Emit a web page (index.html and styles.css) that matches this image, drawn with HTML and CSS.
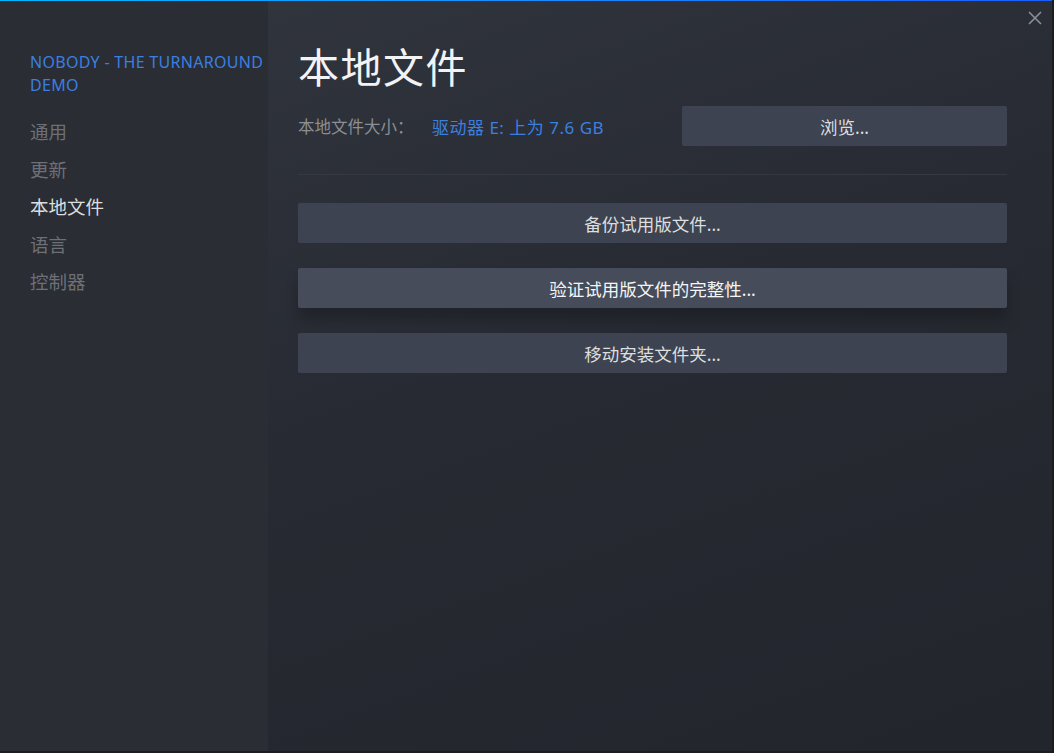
FILE: index.html
```html
<!DOCTYPE html>
<html lang="zh-CN">

<head>
    <meta charset="UTF-8">
    <meta name="viewport" content="width=device-width, initial-scale=1.0">
    <title>本地文件</title>
    <link rel="stylesheet" href="styles.css">
</head>

<body>
    <div class="window">
        <div class="sidebar">
            <div class="game-title">NOBODY - THE TURNAROUND DEMO</div>
            <ul class="nav">
                <li>通用</li>
                <li>更新</li>
                <li class="active">本地文件</li>
                <li>语言</li>
                <li>控制器</li>
            </ul>
        </div>
        <div class="main">
            <button class="close" aria-label="关闭">
                <svg width="14" height="14" viewBox="0 0 14 14">
                    <path d="M1 1 L13 13 M13 1 L1 13" stroke="currentColor" stroke-width="1.6" fill="none" />
                </svg>
            </button>
            <h1>本地文件</h1>
            <div class="size-row">
                <span class="label">本地文件大小：</span>
                <span class="drive">驱动器 E: 上为 7.6 GB</span>
                <button class="btn browse">浏览...</button>
            </div>
            <div class="divider"></div>
            <div class="actions">
                <button class="btn">备份试用版文件...</button>
                <button class="btn hover">验证试用版文件的完整性...</button>
                <button class="btn">移动安装文件夹...</button>
            </div>
        </div>
    </div>
</body>

</html>
```

FILE: styles.css
```css
:root {
    --sidebar-bg: #2a2d34;
    --button-bg: #3d4350;
    --button-hover: #464c59;
    --text-color: #dcdedf;
    --muted: #6d7077;
    --blue: #3b7fe0;
}

* {
    margin: 0;
    padding: 0;
    box-sizing: border-box;
}

body {
    background: #1a1c20;
    font-family: 'Noto Sans', 'Noto Sans CJK SC', sans-serif;
    color: var(--text-color);
    width: 1054px;
    height: 753px;
    overflow: hidden;
}

.window {
    width: 1052px;
    height: 751px;
    display: flex;
    border-image: linear-gradient(90deg, #00b8ff, #1a8cff 50%, #1a5fff) 1;
    border-width: 1px 0 0 0;
    border-style: solid;
}

.sidebar {
    width: 268px;
    background: var(--sidebar-bg);
    padding: 50px 0 0 30px;
}

.game-title {
    color: var(--blue);
    font-size: 16px;
    line-height: 23px;
    letter-spacing: 0.3px;
    text-transform: uppercase;
    margin-bottom: 16px;
}

.nav {
    list-style: none;
}

.nav li {
    font-size: 18.5px;
    line-height: 37.5px;
    color: var(--muted);
}

.nav li.active {
    color: var(--text-color);
}

.main {
    flex: 1;
    position: relative;
    padding: 37px 45px 0 30px;
    background: linear-gradient(160deg, #30343c 0%, #272a32 45%, #22252c 100%);
}

.close {
    position: absolute;
    top: 10px;
    right: 10px;
    background: none;
    border: none;
    color: #8a9299;
    width: 14px;
    height: 14px;
    display: flex;
}

h1 {
    font-weight: 400;
    font-size: 41px;
    line-height: 58px;
    color: #f2f3f4;
    letter-spacing: 1.5px;
}

.size-row {
    display: flex;
    align-items: center;
    margin-top: 10px;
    font-size: 16.5px;
}

.label {
    color: #8b8e93;
    width: 134px;
}

.drive {
    color: var(--blue);
    font-size: 17px;
    letter-spacing: 0.5px;
    flex: 1;
}

.btn {
    font-family: inherit;
    background: var(--button-bg);
    color: var(--text-color);
    border: none;
    border-radius: 2px;
    height: 40px;
    font-size: 17.5px;
}

.browse {
    width: 325px;
}

.divider {
    height: 1px;
    background: #353840;
    margin: 28px 0 28px;
}

.actions {
    display: flex;
    flex-direction: column;
    gap: 25px;
}

.btn.hover {
    background: var(--button-hover);
    color: #f4f5f6;
    box-shadow: 0 12px 14px rgba(0, 0, 0, 0.22);
}
```
